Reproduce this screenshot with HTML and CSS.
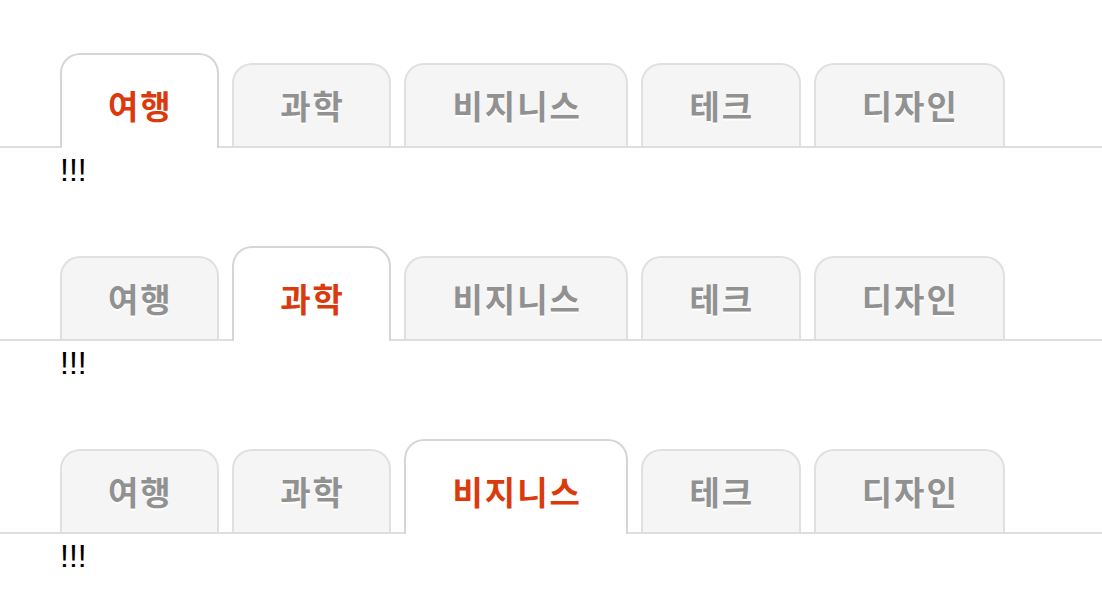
FILE: index.html
```html
<!DOCTYPE html>
<html lang="ko">
<head>
  <meta charset="UTF-8" />
  <title>Tabs</title>
  <link rel="stylesheet" href="styles.css">
</head>
<body>
  <!-- Tab set 1 -->
  <div class="tab-set">
    <ul class="tabs">
      <li class="tab active">여행</li>
      <li class="tab">과학</li>
      <li class="tab">비지니스</li>
      <li class="tab">테크</li>
      <li class="tab">디자인</li>
    </ul>
    <div class="tab-content">!!!</div>
  </div>

  <!-- Tab set 2 -->
  <div class="tab-set">
    <ul class="tabs">
      <li class="tab">여행</li>
      <li class="tab active">과학</li>
      <li class="tab">비지니스</li>
      <li class="tab">테크</li>
      <li class="tab">디자인</li>
    </ul>
    <div class="tab-content">!!!</div>
  </div>

  <!-- Tab set 3 -->
  <div class="tab-set">
    <ul class="tabs">
      <li class="tab">여행</li>
      <li class="tab">과학</li>
      <li class="tab active">비지니스</li>
      <li class="tab">테크</li>
      <li class="tab">디자인</li>
    </ul>
    <div class="tab-content">!!!</div>
  </div>
</body>
</html>
```

FILE: styles.css
```css
body {
  margin: 0;
  padding: 0;
  background: #fff;
  font-family: "Liberation Sans", Arial, sans-serif;
}

.tab-set {
  padding-top: 53px;
}

.tabs {
  display: flex;
  align-items: flex-end;
  gap: 13px;
  margin: 0;
  padding: 0 0 0 60px;
  list-style: none;
  border-bottom: 2px solid #dedede;
}

.tab {
  padding: 0 44.5px 0 46px;
  line-height: 81px;
  font-family: "Noto Sans CJK KR", "Noto Sans", sans-serif;
  font-size: 33px;
  font-weight: bold;
  letter-spacing: 2px;
  color: #919191;
  text-shadow: 0 2px 0 #fff;
  background: #f5f5f5;
  border: 2px solid #e0e0e0;
  border-bottom: none;
  border-radius: 20px 20px 0 0;
  cursor: pointer;
}

.tab.active {
  padding-top: 10px;
  padding-bottom: 2px;
  margin-bottom: -2px;
  color: #db3a0d;
  background: #fff;
  border-color: #d6d6d6;
}

.tab-content {
  padding: 2px 0 0 60px;
  height: 43px;
  line-height: 40px;
  font-size: 32px;
  color: #000;
}
```
